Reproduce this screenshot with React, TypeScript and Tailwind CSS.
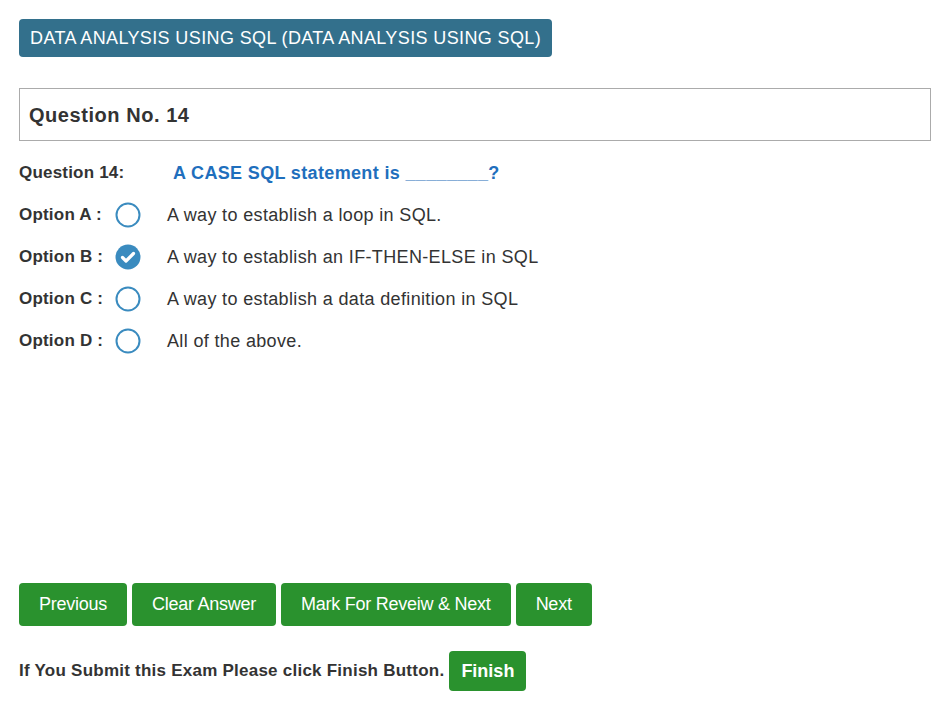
import { useState } from 'react';

const OPTIONS = [
  { key: 'A', text: 'A way to establish a loop in SQL.' },
  { key: 'B', text: 'A way to establish an IF-THEN-ELSE in SQL' },
  { key: 'C', text: 'A way to establish a data definition in SQL' },
  { key: 'D', text: 'All of the above.' },
];

const BUTTONS = ['Previous', 'Clear Answer', 'Mark For Reveiw & Next', 'Next'];

const Radio = ({ checked }: { checked: boolean }) =>
  checked ? (
    <svg width="26" height="26" viewBox="0 0 26 26">
      <circle cx="13" cy="13" r="12.5" fill="#3a8bbf" />
      <path d="M7.5 13.5 L11 17 L18.5 9.5" fill="none" stroke="#fff" strokeWidth="3.2" strokeLinecap="round" strokeLinejoin="round" />
    </svg>
  ) : (
    <svg width="26" height="26" viewBox="0 0 26 26">
      <circle cx="13" cy="13" r="11.5" fill="#fff" stroke="#3a8bbf" strokeWidth="2" />
    </svg>
  );

const App = () => {
  const [selected, setSelected] = useState('B');

  return (
    <div className="min-h-screen bg-white pl-[19px] pr-[2px] pt-[19px] text-[#333] font-['Liberation_Sans',Arial,sans-serif]">
      {/* Subject badge */}
      <div className="inline-block rounded-[4px] bg-[#33708c] px-[11px] h-[38px] leading-[38px] text-[18px] text-white tracking-[0.38px]">
        DATA ANALYSIS USING SQL (DATA ANALYSIS USING SQL)
      </div>

      {/* Question header */}
      <div className="mt-[31px] border border-[#ababab] h-[53px] flex items-center px-[9px]">
        <h3 className="text-[20px] font-bold text-[#333] tracking-[0.55px]">Question No. 14</h3>
      </div>

      {/* Question */}
      <div className="mt-[19px] flex items-center h-[26px]">
        <span className="w-[154px] text-[17px] font-bold tracking-[0.2px]">Question 14:</span>
        <span className="text-[18px] font-bold text-[#1f6fbd] tracking-[0.35px]">A CASE SQL statement is ________?</span>
      </div>

      {/* Options */}
      <div className="mt-[16px] flex flex-col gap-[16px]">
        {OPTIONS.map((o) => (
          <label key={o.key} className="flex items-center h-[26px] cursor-pointer" onClick={() => setSelected(o.key)}>
            <span className="w-[96px] text-[17px] font-bold tracking-[0.2px]">Option {o.key} :</span>
            <Radio checked={selected === o.key} />
            <span className="ml-[26px] text-[18px] tracking-[0.35px]">{o.text}</span>
          </label>
        ))}
      </div>

      {/* Nav buttons */}
      <div className="mt-[229px] flex gap-[5px]">
        {BUTTONS.map((b) => (
          <button key={b} className="h-[43px] rounded-[4px] bg-[#2a922e] px-[20px] text-[18px] text-white tracking-[-0.25px]">
            {b}
          </button>
        ))}
      </div>

      {/* Finish */}
      <div className="mt-[25px] flex items-center gap-[5px]">
        <span className="text-[17px] font-bold tracking-[0.24px]">If You Submit this Exam Please click Finish Button.</span>
        <button className="h-[40px] rounded-[4px] bg-[#2a922e] px-[12px] text-[18px] font-bold text-white">Finish</button>
      </div>
    </div>
  );
};

export default App;
